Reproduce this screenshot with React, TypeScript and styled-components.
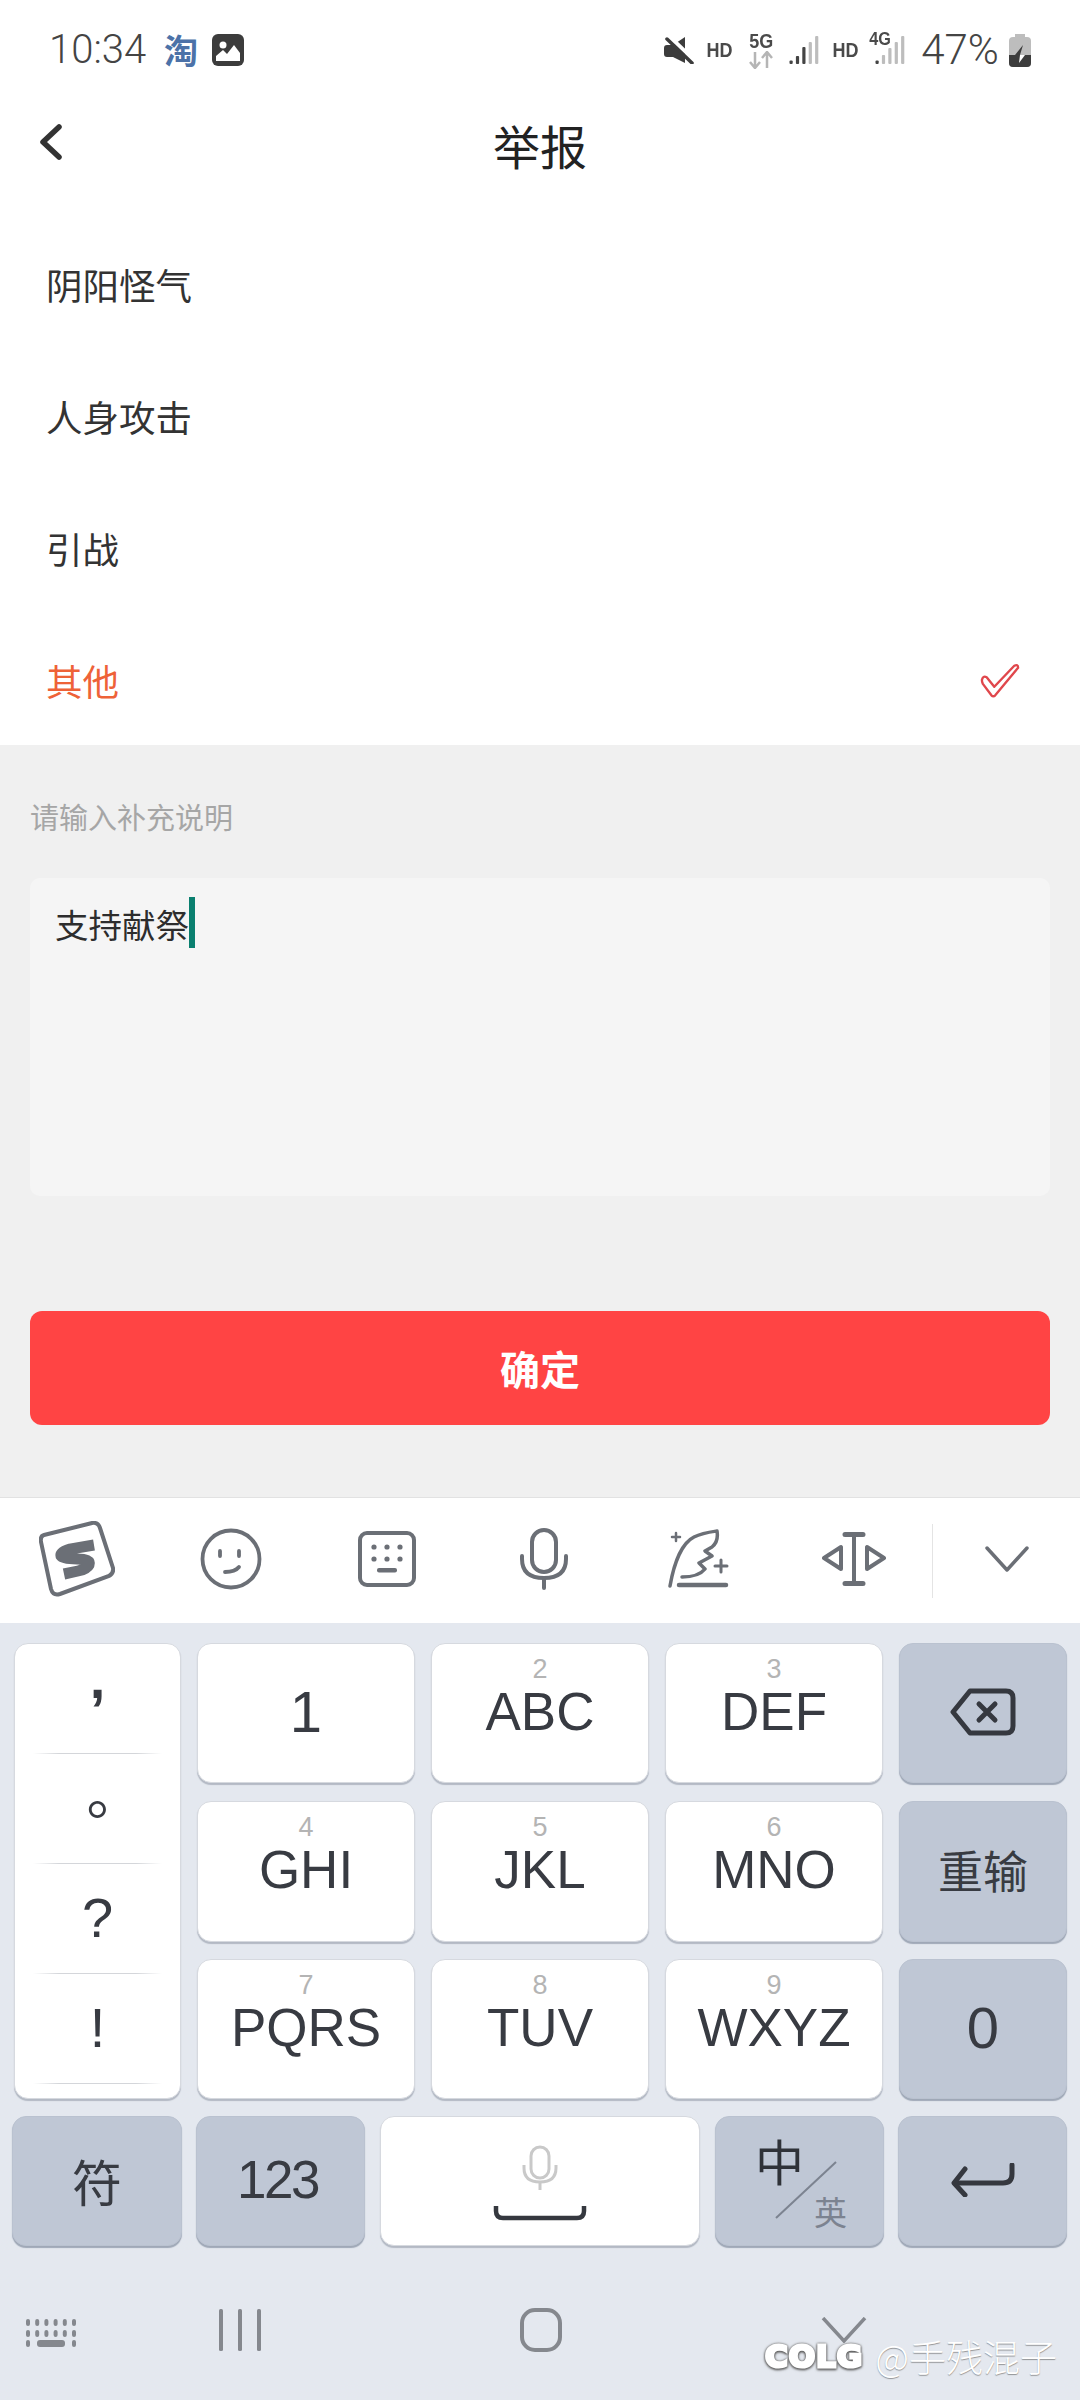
import styled, { createGlobalStyle } from "styled-components";

const GlobalStyle = createGlobalStyle`
  html, body {
    margin: 0;
    padding: 0;
    background: #fff;
  }
  * {
    box-sizing: border-box;
  }
`

const cjk = `"Noto Sans CJK SC", "Noto Sans", sans-serif`
const latin = `"Liberation Sans", "Noto Sans CJK SC", sans-serif`

const Phone = styled.div`
  position: relative;
  width: 1080px;
  height: 2400px;
  overflow: hidden;
  display: flex;
  flex-direction: column;
  background: #fff;
  font-family: ${cjk};
`

const StatusBar = styled.div`
  height: 100px;
  display: flex;
  align-items: center;
  padding: 0 45px 0 49px;
  color: #444;
`

const Clock = styled.span`
  font-family: Roboto, sans-serif;
  font-weight: 300;
  font-size: 40px;
  line-height: 40px;
  width: 115px;
  white-space: nowrap;
`

const TaoIcon = styled.span`
  width: 48px;
  font-size: 34px;
  line-height: 40px;
  font-weight: 700;
  color: #4c72a8;
`

const StatusRight = styled.div`
  margin-left: auto;
  display: flex;
  align-items: center;
  height: 40px;
`

const StatusCell = styled.div<{ $w: number }>`
  position: relative;
  width: ${p => p.$w}px;
  height: 40px;
  display: flex;
  flex-direction: column;
  align-items: center;
  justify-content: center;
`

const Tiny = styled.span<{ $size?: number }>`
  font-family: "Liberation Sans", sans-serif;
  font-weight: 700;
  font-size: ${p => p.$size || 20}px;
  line-height: ${p => p.$size || 20}px;
  transform: scaleX(0.9);
  color: #4a4a4a;
`

const FourG = styled(Tiny)`
  position: absolute;
  left: 3px;
  top: 0;
`

const Battery = styled.span`
  font-family: Roboto, sans-serif;
  font-weight: 300;
  font-size: 42px;
  line-height: 40px;
  white-space: nowrap;
`

const NavBar = styled.div`
  position: relative;
  height: 90px;
  display: flex;
  align-items: center;
  justify-content: center;
`

const BackButton = styled.div`
  position: absolute;
  left: 38px;
  top: 23px;
  width: 26px;
  height: 38px;
`

const Title = styled.div`
  font-size: 47px;
  line-height: 90px;
  color: #222;
`

const ReasonList = styled.div`
  padding-top: 30px;
  background: #fff;
`

const Reason = styled.div<{ $active?: boolean }>`
  height: 132px;
  padding: 0 60px 3px 46px;
  display: flex;
  align-items: center;
  justify-content: space-between;
  font-size: 36.5px;
  color: ${p => (p.$active ? "#ee6238" : "#333")};
  &:last-child {
    height: 129px;
    padding-bottom: 0;
  }
`

const FormArea = styled.div`
  height: 752px;
  background: #f0f0f0;
  padding: 49px 30px 0;
  display: flex;
  flex-direction: column;
`

const HintLabel = styled.div`
  font-size: 29px;
  line-height: 44px;
  color: #a6a6a6;
`

const InputBox = styled.div`
  margin-top: 40px;
  height: 318px;
  padding: 19px 25px;
  background: #f5f5f5;
  border-radius: 10px;
  display: flex;
  align-items: flex-start;
`

const InputText = styled.span`
  font-size: 33.5px;
  line-height: 53px;
  color: #2d2d2d;
`

const Caret = styled.span`
  width: 6px;
  height: 51px;
  background: #0a7f6f;
`

const SubmitButton = styled.div`
  margin-top: 115px;
  height: 114px;
  background: #ff4444;
  border-radius: 12px;
  display: flex;
  align-items: center;
  justify-content: center;
  color: #fff;
  font-size: 40px;
  font-weight: 700;
`

const Toolbar = styled.div`
  height: 126px;
  background: #fff;
  border-top: 1px solid #e2e2e2;
  display: flex;
  align-items: center;
`

const ToolSlot = styled.div<{ $w: number }>`
  width: ${p => p.$w}px;
  height: 100%;
  padding-bottom: 3px;
  display: flex;
  align-items: center;
  justify-content: center;
`

const ToolDivider = styled.div`
  width: 1px;
  height: 74px;
  margin-left: 1px;
  background: #e4e4e4;
`

const Keyboard = styled.div`
  flex: 1;
  background: #e4e8ef;
  padding-top: 20px;
  display: flex;
  flex-direction: column;
`

const KeyGrid = styled.div`
  display: grid;
  grid-template-columns: 167px 218px 218px 218px 168px;
  grid-template-rows: 140px 141px 140px;
  column-gap: 16px;
  row-gap: 17.5px;
  padding-left: 14px;
`

const KeyBase = styled.div<{ $dark?: boolean; $big?: boolean }>`
  position: relative;
  display: flex;
  align-items: center;
  justify-content: center;
  padding-bottom: 3px;
  border-radius: 14px;
  background: ${p => (p.$dark ? "#bfc7d5" : "#fff")};
  border: 1px solid ${p => (p.$dark ? "#bac2d0" : "#d6d9df")};
  box-shadow: 0 2px 1px ${p => (p.$dark ? "#9fa8b7" : "#b3b9c4")};
  color: #383b42;
  font-family: ${latin};
  font-size: ${p => (p.$big ? 58 : 53)}px;
`

const SymbolColumn = styled(KeyBase)`
  grid-row: 1 / 4;
  flex-direction: column;
  justify-content: flex-start;
  padding-bottom: 0;
`

const SymbolCell = styled.div<{ $dx: number; $dy: number; $bold?: boolean }>`
  position: relative;
  width: 100%;
  height: 110px;
  display: flex;
  align-items: center;
  justify-content: center;
  font-size: 56px;
  line-height: 60px;
  font-weight: ${p => (p.$bold ? 700 : 400)};
  & > span {
    transform: translate(${p => p.$dx}px, ${p => p.$dy}px);
  }
  &::after {
    content: "";
    position: absolute;
    left: 18px;
    right: 18px;
    bottom: 0;
    height: 1px;
    background: linear-gradient(90deg, #fff, #d4d6da 20%, #d4d6da 80%, #fff);
  }
`

const KeyHint = styled.span`
  position: absolute;
  top: 10px;
  left: 0;
  right: 0;
  text-align: center;
  font-size: 27px;
  line-height: 30px;
  color: #b4b4b4;
`

const CnLabel = styled.span<{ $size: number }>`
  font-family: ${cjk};
  font-size: ${p => p.$size}px;
`

const BottomKeys = styled.div`
  margin-top: 17px;
  height: 130px;
  padding-left: 12px;
  display: flex;
`

const BottomKey = styled(KeyBase)<{ $w: number; $gap: number }>`
  width: ${p => p.$w}px;
  margin-right: ${p => p.$gap}px;
`

const Digits = styled.span`
  letter-spacing: -2.5px;
  margin-right: 6px;
`

const SpaceInner = styled.div`
  display: flex;
  flex-direction: column;
  align-items: center;
  gap: 14px;
  margin-top: 6px;
`

const LangMain = styled.span`
  position: absolute;
  left: 39px;
  top: 13px;
  font-family: ${cjk};
  font-size: 49px;
  line-height: 60px;
  color: #2f3238;
`

const LangSub = styled.span`
  position: absolute;
  left: 98px;
  top: 72px;
  font-family: ${cjk};
  font-size: 33px;
  line-height: 44px;
  color: #7c8390;
`

const LangSlash = styled.svg`
  position: absolute;
  left: 59px;
  top: 44px;
`

const SystemNav = styled.div`
  flex: 1;
  display: flex;
  align-items: flex-start;
`

const NavSlot = styled.div<{ $left: number; $w: number; $top: number }>`
  margin-left: ${p => p.$left}px;
  width: ${p => p.$w}px;
  padding-top: ${p => p.$top}px;
  display: flex;
`

const Watermark = styled.div`
  position: absolute;
  left: 765px;
  top: 2331px;
  height: 50px;
  display: flex;
  align-items: center;
  gap: 12px;
  white-space: nowrap;
`

const WatermarkLogo = styled.span`
  font-family: "DejaVu Sans", sans-serif;
  font-weight: 700;
  font-size: 31px;
  letter-spacing: 1px;
  color: #fff;
  -webkit-text-stroke: 3px #fff;
  filter: drop-shadow(0 1px 1px #555) drop-shadow(0 0 1px #777);
`

const WatermarkName = styled.span`
  font-family: ${cjk};
  font-weight: 300;
  font-size: 37px;
  line-height: 50px;
  color: #fff;
  text-shadow: 0 1px 1px rgba(90, 90, 90, 0.6);
`

const reasons = ["阴阳怪气", "人身攻击", "引战", "其他"]

const letterKeys = [
    {hint: "2", label: "ABC"},
    {hint: "3", label: "DEF"},
    {hint: "4", label: "GHI"},
    {hint: "5", label: "JKL"},
    {hint: "6", label: "MNO"},
    {hint: "7", label: "PQRS"},
    {hint: "8", label: "TUV"},
    {hint: "9", label: "WXYZ"},
]

const symbols = [
    {text: ",", dx: 0, dy: -20, bold: true},
    {text: "。", dx: 17, dy: -14, bold: false},
    {text: "?", dx: 0, dy: -1, bold: false},
    {text: "!", dx: 0, dy: -1, bold: false},
]

function SignalIcon({bars, active}: { bars: number[]; active: number }) {
    return (
        <svg width="30" height="28" viewBox="0 0 30 28">
            {bars.map((h, i) => (
                <rect key={i} x={i * 6.4 + 0.5} y={28 - h} width="3.2" height={h} rx="1"
                      fill={i < active ? "#444" : "#bdbdbd"}/>
            ))}
        </svg>
    )
}

function LetterKey({hint, label}: { hint: string; label: string }) {
    return <KeyBase><KeyHint>{hint}</KeyHint>{label}</KeyBase>
}

export default function App() {
    return (
        <Phone>
            <GlobalStyle/>
            <StatusBar>
                <Clock>10:34</Clock>
                <TaoIcon>淘</TaoIcon>
                <svg width="32" height="32" viewBox="0 0 32 32">
                    <rect width="32" height="32" rx="6" fill="#3c3c3c"/>
                    <circle cx="11" cy="11" r="3.5" fill="#fff"/>
                    <path d="M4 27 V22 L11 16 L15 20 L22 11 L28 19 V27 Z" fill="#fff"/>
                </svg>
                <StatusRight>
                    <StatusCell $w={38}>
                        <svg width="30" height="28" viewBox="0 0 30 28">
                            <path d="M0 12 Q0 9 3 9 H9 L21 1 V27 L9 21 H3 Q0 21 0 18 Z" fill="#3c3c3c"/>
                            <path d="M5 0 L30 24" stroke="#fff" strokeWidth="4"/>
                            <path d="M3 3 L28 27" stroke="#3c3c3c" strokeWidth="3.5" strokeLinecap="round"/>
                        </svg>
                    </StatusCell>
                    <StatusCell $w={42}><Tiny>HD</Tiny></StatusCell>
                    <StatusCell $w={42}>
                        <Tiny>5G</Tiny>
                        <svg width="26" height="18" viewBox="0 0 26 18" fill="none" stroke="#b5b5b5" strokeWidth="2.5">
                            <path d="M7 1 V17 M2 11 L7 17 L12 11"/>
                            <path d="M19 17 V1 M14 7 L19 1 L24 7"/>
                        </svg>
                    </StatusCell>
                    <StatusCell $w={43}><SignalIcon bars={[3.5, 8, 17, 22, 28]} active={3}/></StatusCell>
                    <StatusCell $w={40}><Tiny>HD</Tiny></StatusCell>
                    <StatusCell $w={50}>
                        <FourG $size={18}>4G</FourG>
                        <SignalIcon bars={[3.5, 9, 16, 22, 28]} active={1}/>
                    </StatusCell>
                    <StatusCell $w={90}><Battery>47%</Battery></StatusCell>
                    <StatusCell $w={30}>
                        <svg width="22" height="33" viewBox="0 0 22 33">
                            <rect x="6" y="0" width="10" height="4" fill="#bdbdbd"/>
                            <rect x="0" y="3" width="22" height="30" rx="4" fill="#bdbdbd"/>
                            <path d="M0 21 H22 V29 Q22 33 18 33 H4 Q0 33 0 29 Z" fill="#3c3c3c"/>
                            <path d="M14 11 L6 21 H11 L10 27 L15 21 H11 Z" fill="#3c3c3c"/>
                            <path d="M6 21 H11 L10 29 L16 21 Z" fill="#fff"/>
                        </svg>
                    </StatusCell>
                </StatusRight>
            </StatusBar>

            <NavBar>
                <BackButton>
                    <svg width="26" height="38" viewBox="0 0 26 38" fill="none">
                        <path d="M21 4 L5 19 L21 34" stroke="#333" strokeWidth="5.5" strokeLinecap="round"
                              strokeLinejoin="round"/>
                    </svg>
                </BackButton>
                <Title>举报</Title>
            </NavBar>

            <ReasonList>
                {reasons.map((reason, idx) => (
                    <Reason key={idx} $active={idx === 3}>
                        {reason}
                        {idx === 3 &&
                            <svg width="40" height="36" viewBox="0 0 42 36" fill="none">
                                <path
                                    d="M2 17 Q3 12 7 14 L15 24 L36 2 Q40 0 40 4 L16 33 Q14 35 12 33 L3 21 Q2 19 2 17 Z"
                                    stroke="#e0474c" strokeWidth="2.5" strokeLinejoin="round"/>
                            </svg>
                        }
                    </Reason>
                ))}
            </ReasonList>

            <FormArea>
                <HintLabel>请输入补充说明</HintLabel>
                <InputBox>
                    <InputText>支持献祭</InputText>
                    <Caret/>
                </InputBox>
                <SubmitButton>确定</SubmitButton>
            </FormArea>

            <Toolbar>
                <ToolSlot $w={154}>
                    <svg width="76" height="76" viewBox="0 0 76 76" fill="none" stroke="#6b6f76">
                        <path d="M5 14 L53 2 Q59 1 61 7 L74 47 Q75 52 70 55 L21 73 Q14 75 12 68 L2 21 Q1 15 5 14 Z"
                              strokeWidth="4"/>
                        <path d="M55 24 L31 28 Q21 31 22 35 Q24 38 38 38 Q52 38 50 44 Q48 48 39 50 L25 53"
                              strokeWidth="11"/>
                    </svg>
                </ToolSlot>
                <ToolSlot $w={154}>
                    <svg width="62" height="62" viewBox="0 0 62 62" fill="none" stroke="#6b6f76" strokeLinecap="round">
                        <circle cx="31" cy="31" r="28.5" strokeWidth="3.8"/>
                        <path d="M20 23 V28 M39 23 V28" strokeWidth="3.8"/>
                        <path d="M25 44 Q35 44 39 39" strokeWidth="3.8"/>
                    </svg>
                </ToolSlot>
                <ToolSlot $w={158}>
                    <svg width="58" height="56" viewBox="0 0 58 56" fill="none">
                        <rect x="2" y="2" width="54" height="52" rx="7" stroke="#6b6f76" strokeWidth="4"/>
                        <g fill="#6b6f76">
                            <circle cx="16" cy="16" r="2.6"/>
                            <circle cx="29" cy="16" r="2.6"/>
                            <circle cx="42" cy="16" r="2.6"/>
                            <circle cx="16" cy="28" r="2.6"/>
                            <circle cx="29" cy="28" r="2.6"/>
                            <circle cx="42" cy="28" r="2.6"/>
                            <rect x="19" y="37" width="20" height="4.5" rx="2"/>
                        </g>
                    </svg>
                </ToolSlot>
                <ToolSlot $w={155}>
                    <svg width="50" height="62" viewBox="0 0 50 62" fill="none" stroke="#6b6f76" strokeWidth="4"
                         strokeLinecap="round">
                        <rect x="13" y="2" width="24" height="42" rx="12"/>
                        <path d="M3 28 V31 Q3 50 25 50 Q47 50 47 31 V28"/>
                        <path d="M25 50 V60"/>
                    </svg>
                </ToolSlot>
                <ToolSlot $w={155}>
                    <svg width="62" height="60" viewBox="0 0 62 60" fill="none" stroke="#6b6f76" strokeWidth="3.5"
                         strokeLinecap="round" strokeLinejoin="round">
                        <path
                            d="M2 57 C6 34 14 14 26 8 C34 4 42 3 49 2 C50 8 49 14 44 18 L37 22 L44 27 L31 34 L37 40 C33 45 26 48 14 48"/>
                        <path d="M11 56 H58" strokeWidth="4.5"/>
                        <path d="M8 4 V12 M4 8 H12" strokeWidth="2.5"/>
                        <path d="M53 31 V43 M47 37 H59" strokeWidth="3"/>
                    </svg>
                </ToolSlot>
                <ToolSlot $w={155}>
                    <svg width="64" height="54" viewBox="0 0 64 54" fill="none" stroke="#6b6f76" strokeWidth="4"
                         strokeLinejoin="round">
                        <path d="M32 2 V52"/>
                        <path d="M23 2.5 H41 M23 51.5 H41" strokeWidth="5" strokeLinecap="round"/>
                        <path d="M19 15 V37 L2 26 Z"/>
                        <path d="M45 15 V37 L62 26 Z"/>
                    </svg>
                </ToolSlot>
                <ToolDivider/>
                <ToolSlot $w={147}>
                    <svg width="44" height="28" viewBox="0 0 44 28" fill="none">
                        <path d="M2 3 L22 25 L42 3" stroke="#6b6f76" strokeWidth="3.5" strokeLinecap="round"
                              strokeLinejoin="round"/>
                    </svg>
                </ToolSlot>
            </Toolbar>

            <Keyboard>
                <KeyGrid>
                    <SymbolColumn>
                        {symbols.map(s => (
                            <SymbolCell key={s.text} $dx={s.dx} $dy={s.dy} $bold={s.bold}>
                                <span>{s.text}</span>
                            </SymbolCell>
                        ))}
                    </SymbolColumn>
                    <KeyBase $big>1</KeyBase>
                    <LetterKey {...letterKeys[0]}/>
                    <LetterKey {...letterKeys[1]}/>
                    <KeyBase $dark>
                        <svg width="66" height="48" viewBox="0 0 66 48" fill="none" stroke="#35383f" strokeWidth="5"
                             strokeLinejoin="round" strokeLinecap="round">
                            <path d="M20 3 H56 Q63 3 63 10 V38 Q63 45 56 45 H20 L3 24 Z"/>
                            <path d="M29 16 L45 32 M45 16 L29 32"/>
                        </svg>
                    </KeyBase>
                    <LetterKey {...letterKeys[2]}/>
                    <LetterKey {...letterKeys[3]}/>
                    <LetterKey {...letterKeys[4]}/>
                    <KeyBase $dark><CnLabel $size={45}>重输</CnLabel></KeyBase>
                    <LetterKey {...letterKeys[5]}/>
                    <LetterKey {...letterKeys[6]}/>
                    <LetterKey {...letterKeys[7]}/>
                    <KeyBase $dark $big>0</KeyBase>
                </KeyGrid>

                <BottomKeys>
                    <BottomKey $dark $w={170} $gap={14}><CnLabel $size={50}>符</CnLabel></BottomKey>
                    <BottomKey $dark $w={169} $gap={15}><Digits>123</Digits></BottomKey>
                    <BottomKey $w={320} $gap={15}>
                        <SpaceInner>
                            <svg width="36" height="46" viewBox="0 0 36 46" fill="none" stroke="#c9c9c9" strokeWidth="3">
                                <rect x="9" y="2" width="18" height="31" rx="9"/>
                                <path d="M2 20 V23 Q2 37 18 37 Q34 37 34 23 V20"/>
                                <path d="M18 37 V45"/>
                            </svg>
                            <svg width="94" height="16" viewBox="0 0 94 16" fill="none">
                                <path d="M3 1 V6 Q3 13 10 13 H84 Q91 13 91 6 V1" stroke="#35383f" strokeWidth="4.5"/>
                            </svg>
                        </SpaceInner>
                    </BottomKey>
                    <BottomKey $dark $w={169} $gap={14}>
                        <LangMain>中</LangMain>
                        <LangSlash width="62" height="58" viewBox="0 0 62 58">
                            <path d="M61 1 L1 57" stroke="#7c8390" strokeWidth="2"/>
                        </LangSlash>
                        <LangSub>英</LangSub>
                    </BottomKey>
                    <BottomKey $dark $w={169} $gap={0}>
                        <svg width="64" height="34" viewBox="0 0 64 34" fill="none" stroke="#35383f" strokeWidth="5"
                             strokeLinecap="round" strokeLinejoin="round">
                            <path d="M61 2 V11 Q61 20 52 20 H4"/>
                            <path d="M14 6 L3 20 L14 32"/>
                        </svg>
                    </BottomKey>
                </BottomKeys>

                <SystemNav>
                    <NavSlot $left={26} $w={193} $top={73}>
                        <svg width="50" height="28" viewBox="0 0 50 28" fill="#85888e">
                            {[0, 1, 2, 3, 4, 5].map(i => <rect key={i} x={i * 9.2} y="0" width="4" height="7" rx="2"/>)}
                            {[0, 1, 2, 3, 4, 5].map(i => <rect key={i} x={i * 9.2} y="11" width="4" height="7" rx="2"/>)}
                            <rect x="0" y="21" width="4" height="7" rx="2"/>
                            <rect x="11" y="21" width="28" height="7" rx="3"/>
                            <rect x="46" y="21" width="4" height="7" rx="2"/>
                        </svg>
                    </NavSlot>
                    <NavSlot $left={0} $w={301} $top={63}>
                        <svg width="44" height="42" viewBox="0 0 44 42" fill="#85888e">
                            <rect x="0" y="0" width="4" height="42" rx="1.5"/>
                            <rect x="19" y="0" width="4" height="42" rx="1.5"/>
                            <rect x="38" y="0" width="4" height="42" rx="1.5"/>
                        </svg>
                    </NavSlot>
                    <NavSlot $left={0} $w={301} $top={62}>
                        <svg width="42" height="44" viewBox="0 0 42 44" fill="none">
                            <rect x="2" y="2" width="38" height="40" rx="13" stroke="#85888e" strokeWidth="4"/>
                        </svg>
                    </NavSlot>
                    <NavSlot $left={0} $w={46} $top={71}>
                        <svg width="46" height="26" viewBox="0 0 46 26" fill="none">
                            <path d="M2 1 L23 24 L44 1" stroke="#85888e" strokeWidth="3.5"/>
                        </svg>
                    </NavSlot>
                </SystemNav>
            </Keyboard>

            <Watermark>
                <WatermarkLogo>COLG</WatermarkLogo>
                <WatermarkName>@手残混子</WatermarkName>
            </Watermark>
        </Phone>
    )
}
